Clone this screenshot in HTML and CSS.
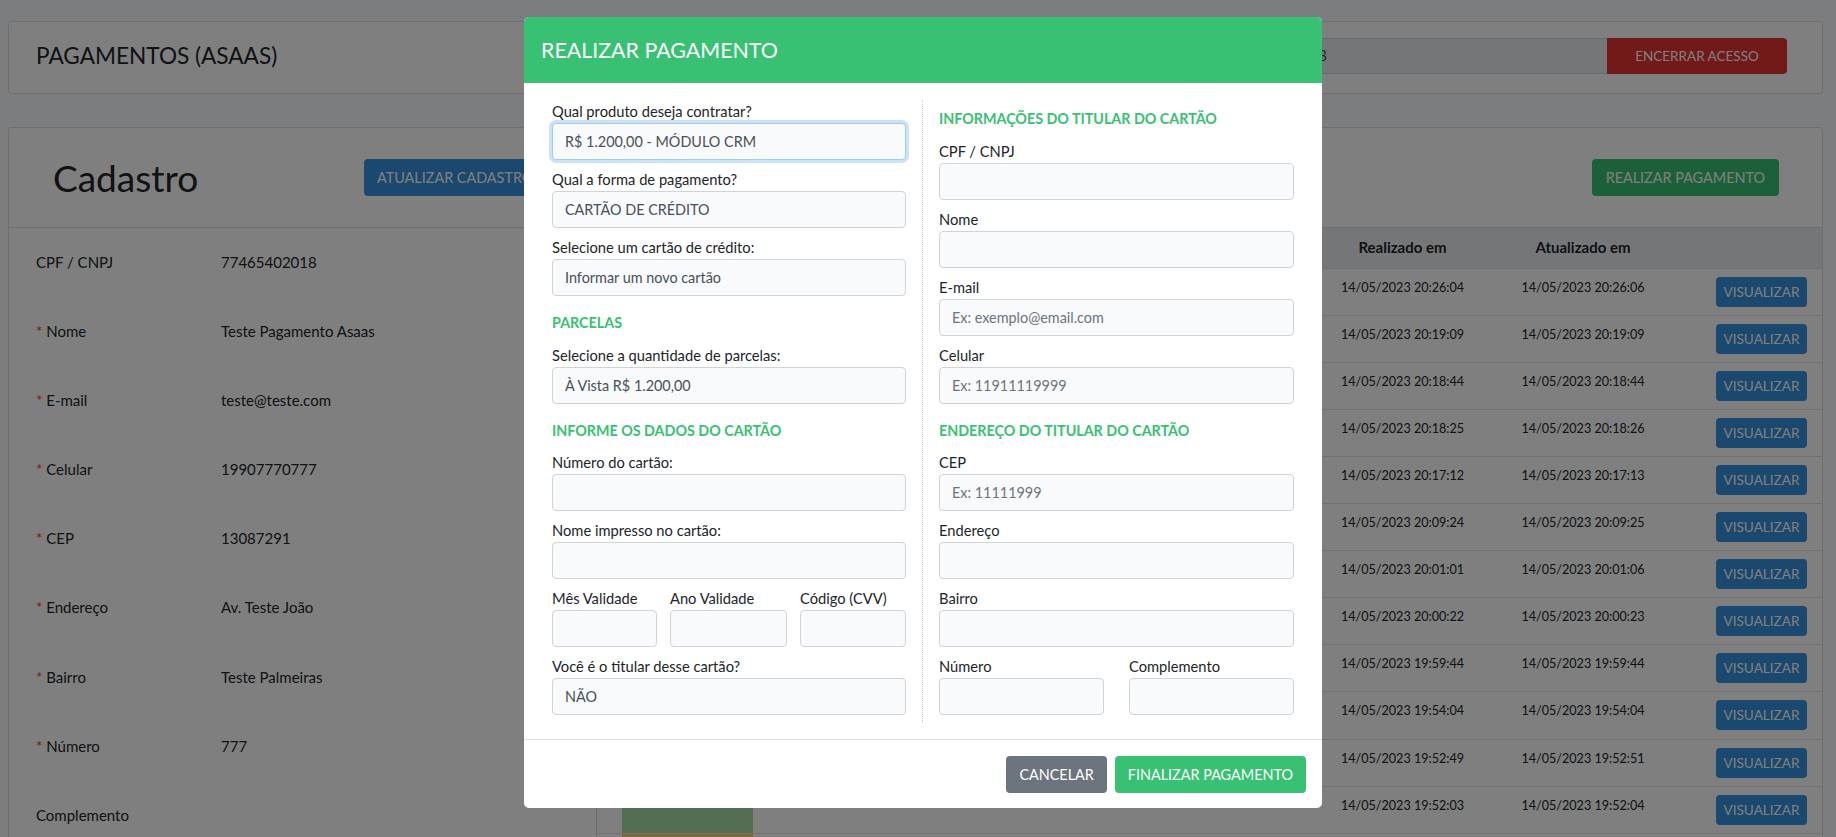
FILE: index.html
```html
<!DOCTYPE html>
<html lang="pt-BR">
<head>
<meta charset="utf-8">
<title>Pagamentos (Asaas)</title>
<link rel="stylesheet" href="styles.css">
</head>
<body>
<div class="page">
  <div class="card topbar">
    <h1 class="top-title">PAGAMENTOS (ASAAS)</h1>
    <div class="input-group">
      <input class="ig-input" value="77465402018" readonly>
      <button class="btn btn-danger btn-end">ENCERRAR ACESSO</button>
    </div>
  </div>

  <div class="card main">
    <div class="card-header">
      <h2 class="cad-title">Cadastro</h2>
      <button class="btn btn-primary btn-big">ATUALIZAR CADASTRO</button>
      <button class="btn btn-success btn-big btn-pay">REALIZAR PAGAMENTO</button>
    </div>
    <div class="card-body">
      <div class="info">
        <div class="info-row"><span class="info-label">CPF / CNPJ</span><span class="info-value">77465402018</span></div>
        <div class="info-row"><span class="info-label"><span class="req">*</span> Nome</span><span class="info-value">Teste Pagamento Asaas</span></div>
        <div class="info-row"><span class="info-label"><span class="req">*</span> E-mail</span><span class="info-value">teste@teste.com</span></div>
        <div class="info-row"><span class="info-label"><span class="req">*</span> Celular</span><span class="info-value">19907770777</span></div>
        <div class="info-row"><span class="info-label"><span class="req">*</span> CEP</span><span class="info-value">13087291</span></div>
        <div class="info-row"><span class="info-label"><span class="req">*</span> Endereço</span><span class="info-value">Av. Teste João</span></div>
        <div class="info-row"><span class="info-label"><span class="req">*</span> Bairro</span><span class="info-value">Teste Palmeiras</span></div>
        <div class="info-row"><span class="info-label"><span class="req">*</span> Número</span><span class="info-value">777</span></div>
        <div class="info-row"><span class="info-label">Complemento</span><span class="info-value"></span></div>
      </div>
      <div class="table">
        <div class="trow thead">
          <div class="cell"></div><div class="cell"></div><div class="cell"></div><div class="cell"></div>
          <div class="cell">Realizado em</div><div class="cell">Atualizado em</div><div class="cell"></div>
        </div>
        <div class="trow"><div class="cell"></div><div class="cell st ok"></div><div class="cell"></div><div class="cell"></div><div class="cell date">14/05/2023 20:26:04</div><div class="cell date">14/05/2023 20:26:06</div><div class="cell act"><button class="btn btn-primary btn-view">VISUALIZAR</button></div></div>
        <div class="trow"><div class="cell"></div><div class="cell st ok"></div><div class="cell"></div><div class="cell"></div><div class="cell date">14/05/2023 20:19:09</div><div class="cell date">14/05/2023 20:19:09</div><div class="cell act"><button class="btn btn-primary btn-view">VISUALIZAR</button></div></div>
        <div class="trow"><div class="cell"></div><div class="cell st ok"></div><div class="cell"></div><div class="cell"></div><div class="cell date">14/05/2023 20:18:44</div><div class="cell date">14/05/2023 20:18:44</div><div class="cell act"><button class="btn btn-primary btn-view">VISUALIZAR</button></div></div>
        <div class="trow"><div class="cell"></div><div class="cell st ok"></div><div class="cell"></div><div class="cell"></div><div class="cell date">14/05/2023 20:18:25</div><div class="cell date">14/05/2023 20:18:26</div><div class="cell act"><button class="btn btn-primary btn-view">VISUALIZAR</button></div></div>
        <div class="trow"><div class="cell"></div><div class="cell st ok"></div><div class="cell"></div><div class="cell"></div><div class="cell date">14/05/2023 20:17:12</div><div class="cell date">14/05/2023 20:17:13</div><div class="cell act"><button class="btn btn-primary btn-view">VISUALIZAR</button></div></div>
        <div class="trow"><div class="cell"></div><div class="cell st ok"></div><div class="cell"></div><div class="cell"></div><div class="cell date">14/05/2023 20:09:24</div><div class="cell date">14/05/2023 20:09:25</div><div class="cell act"><button class="btn btn-primary btn-view">VISUALIZAR</button></div></div>
        <div class="trow"><div class="cell"></div><div class="cell st ok"></div><div class="cell"></div><div class="cell"></div><div class="cell date">14/05/2023 20:01:01</div><div class="cell date">14/05/2023 20:01:06</div><div class="cell act"><button class="btn btn-primary btn-view">VISUALIZAR</button></div></div>
        <div class="trow"><div class="cell"></div><div class="cell st ok"></div><div class="cell"></div><div class="cell"></div><div class="cell date">14/05/2023 20:00:22</div><div class="cell date">14/05/2023 20:00:23</div><div class="cell act"><button class="btn btn-primary btn-view">VISUALIZAR</button></div></div>
        <div class="trow"><div class="cell"></div><div class="cell st ok"></div><div class="cell"></div><div class="cell"></div><div class="cell date">14/05/2023 19:59:44</div><div class="cell date">14/05/2023 19:59:44</div><div class="cell act"><button class="btn btn-primary btn-view">VISUALIZAR</button></div></div>
        <div class="trow"><div class="cell"></div><div class="cell st ok"></div><div class="cell"></div><div class="cell"></div><div class="cell date">14/05/2023 19:54:04</div><div class="cell date">14/05/2023 19:54:04</div><div class="cell act"><button class="btn btn-primary btn-view">VISUALIZAR</button></div></div>
        <div class="trow"><div class="cell"></div><div class="cell st ok"></div><div class="cell"></div><div class="cell"></div><div class="cell date">14/05/2023 19:52:49</div><div class="cell date">14/05/2023 19:52:51</div><div class="cell act"><button class="btn btn-primary btn-view">VISUALIZAR</button></div></div>
        <div class="trow"><div class="cell"></div><div class="cell st ok"></div><div class="cell"></div><div class="cell"></div><div class="cell date">14/05/2023 19:52:03</div><div class="cell date">14/05/2023 19:52:04</div><div class="cell act"><button class="btn btn-primary btn-view">VISUALIZAR</button></div></div>
        <div class="trow"><div class="cell"></div><div class="cell st warn"></div><div class="cell"></div><div class="cell"></div><div class="cell"></div><div class="cell"></div><div class="cell"></div></div>
      </div>
    </div>
  </div>
</div>

<div class="backdrop"></div>

<div class="modal">
  <div class="modal-header">
    <h4 class="modal-title">REALIZAR PAGAMENTO</h4>
  </div>
  <div class="modal-body">
    <div class="col-left">
      <div class="group">
        <label>Qual produto deseja contratar?</label>
        <select class="form-control focused"><option>R$ 1.200,00 - MÓDULO CRM</option></select>
      </div>
      <div class="group">
        <label>Qual a forma de pagamento?</label>
        <select class="form-control"><option>CARTÃO DE CRÉDITO</option></select>
      </div>
      <div class="group">
        <label>Selecione um cartão de crédito:</label>
        <select class="form-control"><option>Informar um novo cartão</option></select>
      </div>
      <h6 class="section-title">PARCELAS</h6>
      <div class="group">
        <label>Selecione a quantidade de parcelas:</label>
        <select class="form-control"><option>À Vista R$ 1.200,00</option></select>
      </div>
      <h6 class="section-title">INFORME OS DADOS DO CARTÃO</h6>
      <div class="group">
        <label>Número do cartão:</label>
        <input class="form-control">
      </div>
      <div class="group">
        <label>Nome impresso no cartão:</label>
        <input class="form-control">
      </div>
      <div class="group row3">
        <div><label>Mês Validade</label><input class="form-control"></div>
        <div><label>Ano Validade</label><input class="form-control"></div>
        <div><label>Código (CVV)</label><input class="form-control"></div>
      </div>
      <div class="group">
        <label>Você é o titular desse cartão?</label>
        <select class="form-control"><option>NÃO</option></select>
      </div>
    </div>
    <div class="col-right">
      <h6 class="section-title">INFORMAÇÕES DO TITULAR DO CARTÃO</h6>
      <div class="group">
        <label>CPF / CNPJ</label>
        <input class="form-control">
      </div>
      <div class="group">
        <label>Nome</label>
        <input class="form-control">
      </div>
      <div class="group">
        <label>E-mail</label>
        <input class="form-control" placeholder="Ex: exemplo@email.com">
      </div>
      <div class="group">
        <label>Celular</label>
        <input class="form-control" placeholder="Ex: 11911119999">
      </div>
      <h6 class="section-title">ENDEREÇO DO TITULAR DO CARTÃO</h6>
      <div class="group">
        <label>CEP</label>
        <input class="form-control" placeholder="Ex: 11111999">
      </div>
      <div class="group">
        <label>Endereço</label>
        <input class="form-control">
      </div>
      <div class="group">
        <label>Bairro</label>
        <input class="form-control">
      </div>
      <div class="group row2">
        <div><label>Número</label><input class="form-control"></div>
        <div><label>Complemento</label><input class="form-control"></div>
      </div>
    </div>
  </div>
  <div class="modal-footer">
    <button class="btn btn-secondary btn-big">CANCELAR</button>
    <button class="btn btn-success btn-big">FINALIZAR PAGAMENTO</button>
  </div>
</div>
</body>
</html>
```

FILE: styles.css
```css
* { box-sizing: border-box; }

html, body {
  margin: 0;
  height: 837px;
  overflow: hidden;
}

body {
  background: #f8fafc;
  font-family: Lato, "Noto Sans", sans-serif;
  font-size: 14.7px;
  line-height: 23px;
  color: #212529;
}

.page {
  padding: 21px 13px 0 8px;
}

.card {
  background: #fff;
  border: 1px solid rgba(0, 0, 0, 0.125);
  border-radius: 4px;
}

/* ---------- top bar ---------- */
.topbar {
  height: 73px;
  display: flex;
  align-items: center;
  padding: 0 35px 4px 27px;
}

.top-title {
  flex: 1;
  margin: 0;
  font-size: 22.6px;
  font-weight: 400;
  line-height: 30px;
}

.input-group {
  display: flex;
  height: 36px;
}

.ig-input {
  width: 385px;
  height: 36px;
  border: 1px solid #ced4da;
  border-right: 0;
  border-radius: 4px 0 0 4px;
  background: #e9ecef;
  padding: 0 12px;
  font-family: inherit;
  font-size: 14.4px;
  color: #495057;
}

.btn {
  border: 0;
  border-radius: 4px;
  color: #fff;
  font-family: inherit;
  cursor: pointer;
}

.btn-primary { background: #3490dc; }
.btn-success { background: #38c172; }
.btn-danger { background: #e3342f; }
.btn-secondary { background: #6c757d; }

.btn-end {
  width: 180px;
  height: 36px;
  border-radius: 0 4px 4px 0;
  font-size: 13.5px;
}

.btn-big {
  height: 37px;
  padding: 0 13px;
  font-size: 14.4px;
}

/* ---------- main card ---------- */
.main {
  margin-top: 33px;
}

.card-header {
  height: 100px;
  display: flex;
  align-items: center;
  padding: 0 43px 0 44px;
  border-bottom: 1px solid rgba(0, 0, 0, 0.125);
}

.cad-title {
  width: 311px;
  margin: 0;
  font-size: 37px;
  font-weight: 400;
  line-height: 44px;
}

.btn-pay {
  margin-left: auto;
  padding: 0 14px;
}

.card-body {
  display: flex;
}

.info {
  width: 588px;
  flex: none;
  border-right: 1px solid rgba(0, 0, 0, 0.125);
}

.info-row {
  display: flex;
  padding: 23px 0 23px 27px;
  line-height: 23.1px;
  font-size: 15px;
}

.info-label {
  width: 185px;
}

.req {
  color: #e3342f;
}

/* ---------- table ---------- */
.table {
  flex: 1;
}

.trow {
  display: grid;
  grid-template-columns: 25px 131px 280px 279px 181px 180px 1fr;
  height: 47.1px;
  border-bottom: 1px solid #dee2e6;
}

.thead {
  height: 40.6px;
  background: #e9ecef;
  font-weight: 700;
  font-size: 15px;
  text-align: center;
  align-items: center;
}

.cell.date {
  text-align: center;
  padding-top: 7px;
  font-size: 12.6px;
}

.cell.st.ok { background: #a8dca6; }
.cell.st.warn { background: #fec86c; }

.cell.act {
  display: flex;
  justify-content: flex-end;
  align-items: flex-start;
  padding: 8px 15px 0 0;
}

.btn-view {
  width: 91px;
  height: 30px;
  font-size: 13.6px;
  padding: 0;
}

/* ---------- modal ---------- */
.backdrop {
  position: fixed;
  inset: 0;
  background: rgba(0, 0, 0, 0.5);
}

.modal {
  position: fixed;
  left: 524px;
  top: 17px;
  width: 798px;
  background: #fff;
  border-radius: 5px;
  overflow: hidden;
}

.modal-header {
  height: 66px;
  display: flex;
  align-items: center;
  padding: 0 17px;
  background: #38c172;
}

.modal-title {
  margin: 0;
  color: #fff;
  font-size: 21.4px;
  font-weight: 400;
  line-height: 28px;
}

.modal-body {
  display: flex;
  padding: 17px 28px 16px;
}

.col-left {
  width: 354px;
}

.col-right {
  width: 372px;
  margin-left: 16px;
  padding-left: 16px;
  border-left: 1px dotted #c8c8c8;
}

.group {
  margin-bottom: 8px;
}

.group label {
  display: block;
  height: 23px;
  line-height: 23px;
  color: #212529;
}

.row3 {
  display: grid;
  grid-template-columns: 105px 117px 106px;
  column-gap: 13px;
}

.row2 {
  display: grid;
  grid-template-columns: 165px 165px;
  column-gap: 25px;
}

.section-title {
  margin: 16px 0 10.5px;
  color: #38c172;
  font-size: 14.3px;
  font-weight: 700;
  line-height: 21px;
}

.col-right .section-title:first-child {
  margin-top: 8px;
}

.form-control {
  display: block;
  width: 100%;
  height: 37px;
  padding: 0 12px;
  border: 1px solid #ced4da;
  border-radius: 4px;
  background: #f8fafc;
  font-family: inherit;
  font-size: 14.4px;
  color: #495057;
  -webkit-appearance: none;
  appearance: none;
  outline: none;
}

.form-control::placeholder {
  color: #6c757d;
}

.form-control.focused {
  border-color: #a1cbef;
  box-shadow: 0 0 0 3px rgba(52, 144, 220, 0.25);
}

.modal-footer {
  display: flex;
  justify-content: flex-end;
  gap: 8px;
  padding: 16px 16px 15px;
  border-top: 1px solid #dee2e6;
}
```
